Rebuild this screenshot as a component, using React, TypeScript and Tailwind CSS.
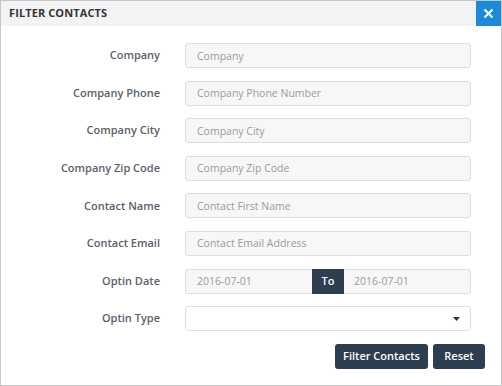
import * as React from "react";

const rows: { label: string; placeholder: string }[] = [
  { label: "Company", placeholder: "Company" },
  { label: "Company Phone", placeholder: "Company Phone Number" },
  { label: "Company City", placeholder: "Company City" },
  { label: "Company Zip Code", placeholder: "Company Zip Code" },
  { label: "Contact Name", placeholder: "Contact First Name" },
  { label: "Contact Email", placeholder: "Contact Email Address" },
];

const inputCls =
  "h-[25px] rounded-[3px] border border-[#dedede] bg-[#f7f7f7] px-[11px] text-[10.5px] text-[#999] placeholder:text-[#9a9a9a] outline-none";

export default function App() {
  return (
    <div
      className="flex h-[386px] w-[502px] flex-col border border-[#c6c6c6] bg-white"
      style={{ fontFamily: "'Open Sans', sans-serif" }}
    >
      {/* Header */}
      <div className="flex h-[25px] items-center justify-between bg-[#f2f3f5]">
        <span className="pl-[8px] text-[11px] font-bold tracking-[0.1px] text-[#333]">
          FILTER CONTACTS
        </span>
        <button className="flex h-[25px] w-[25px] items-center justify-center bg-[#1b8ad9]">
          <svg width="11" height="11" viewBox="0 0 11 11">
            <path d="M1.5 1.5 L9.5 9.5 M9.5 1.5 L1.5 9.5" stroke="white" strokeWidth="2" />
          </svg>
        </button>
      </div>

      {/* Form */}
      <div className="flex flex-col gap-[12.6px] pt-[17px] pr-[30px]">
        {rows.map((r) => (
          <div key={r.label} className="flex items-center">
            <label className="w-[159px] text-right text-[11px] font-semibold text-[#5b606b]">
              {r.label}
            </label>
            <input className={`ml-[25px] w-[286px] ${inputCls}`} placeholder={r.placeholder} />
          </div>
        ))}

        <div className="flex items-center">
          <label className="w-[159px] text-right text-[11px] font-semibold text-[#5b606b]">
            Optin Date
          </label>
          <div className="ml-[25px] flex w-[286px]">
            <input
              className="h-[25px] w-[127px] rounded-l-[3px] border border-r-0 border-[#dedede] bg-[#f7f7f7] px-[11px] text-[10.5px] placeholder:text-[#9a9a9a] outline-none"
              placeholder="2016-07-01"
            />
            <span className="flex h-[25px] w-[32px] items-center justify-center bg-[#2c3e50] text-[11px] font-semibold text-white">
              To
            </span>
            <input
              className="h-[25px] w-[127px] rounded-r-[3px] border border-l-0 border-[#dedede] bg-[#f7f7f7] px-[10px] text-[10.5px] placeholder:text-[#9a9a9a] outline-none"
              placeholder="2016-07-01"
            />
          </div>
        </div>

        <div className="flex items-center">
          <label className="w-[159px] text-right text-[11px] font-semibold text-[#5b606b]">
            Optin Type
          </label>
          <div className="ml-[25px] flex h-[25px] w-[286px] items-center justify-end rounded-[3px] border border-[#dedede] bg-white pr-[10px]">
            <svg width="7" height="4" viewBox="0 0 7 4">
              <path d="M0 0 L7 0 L3.5 4 Z" fill="#333" />
            </svg>
          </div>
        </div>
      </div>

      <div className="mt-[13px] flex justify-end gap-[5px] pr-[16px]">
        <button className="h-[25px] w-[93px] rounded-[3px] bg-[#2c3e50] text-[11px] font-semibold text-white">
          Filter Contacts
        </button>
        <button className="h-[25px] w-[52px] rounded-[3px] bg-[#2c3e50] text-[11px] font-semibold text-white">
          Reset
        </button>
      </div>
    </div>
  );
}
